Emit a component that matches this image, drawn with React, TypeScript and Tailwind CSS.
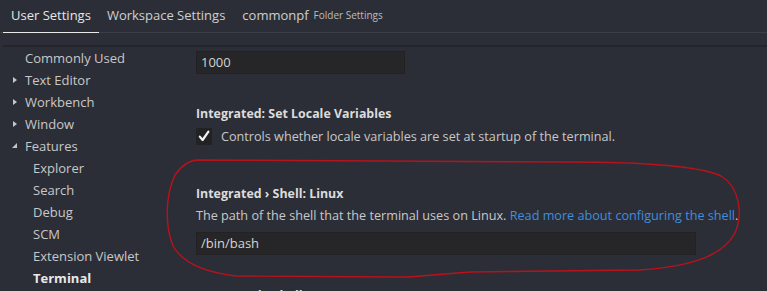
import React from 'react';

const tree = [
  { label: 'Commonly Used', depth: 0, twisty: null },
  { label: 'Text Editor', depth: 0, twisty: 'closed' },
  { label: 'Workbench', depth: 0, twisty: 'closed' },
  { label: 'Window', depth: 0, twisty: 'closed' },
  { label: 'Features', depth: 0, twisty: 'open' },
  { label: 'Explorer', depth: 1, twisty: null },
  { label: 'Search', depth: 1, twisty: null },
  { label: 'Debug', depth: 1, twisty: null },
  { label: 'SCM', depth: 1, twisty: null },
  { label: 'Extension Viewlet', depth: 1, twisty: null },
  { label: 'Terminal', depth: 1, twisty: null, active: true },
];

const Twisty = ({ kind }: { kind: string | null }) => {
  if (kind === 'closed') {
    return (
      <svg width="6" height="8" viewBox="0 0 6 8" className="absolute left-[12px] top-[7px]">
        <path d="M1 1 L5 4 L1 7 Z" fill="#c5c5c5" />
      </svg>
    );
  }
  if (kind === 'open') {
    return (
      <svg width="7" height="7" viewBox="0 0 7 7" className="absolute left-[11px] top-[7px]">
        <path d="M6 1 L6 6 L1 6 Z" fill="#c5c5c5" />
      </svg>
    );
  }
  return null;
};

const Sidebar = () => (
  <div className="w-[190px] shrink-0 text-[13px]">
    {tree.map((item) => (
      <div
        key={item.label}
        className={`relative h-[22px] leading-[22px] ${item.depth ? 'pl-[33px]' : 'pl-[25px]'} ${item.active ? 'font-bold text-[#e8e8e8]' : 'text-[#c8c8c8]'}`}
      >
        <Twisty kind={item.twisty} />
        {item.label}
      </div>
    ))}
  </div>
);

const TextInput = ({ value, width }: { value: string; width: string }) => (
  <div className={`${width} h-[23px] bg-[#262628] border border-[#222224] pl-[4px] leading-[21px] text-[#d4d4d4] text-[13px]`}>
    {value}
  </div>
);

const Content = () => (
  <div className="flex-1 pl-[6px] pt-[4px] text-[12.65px]">
    <TextInput value="1000" width="w-[209px]" />

    <div className="mt-[31px] font-bold text-[#dcdcdc] leading-[18px] text-[12.4px]">Integrated: Set Locale Variables</div>
    <div className="mt-[4px] flex items-center gap-[9px]">
      <div className="w-[16px] h-[17px] bg-[#222224] flex items-center justify-center">
        <svg width="12" height="12" viewBox="0 0 12 12">
          <path d="M1.8 6.6 L4.6 10 L10.4 1.6" fill="none" stroke="#f2f2f2" strokeWidth="2.2" strokeLinecap="round" strokeLinejoin="round" />
        </svg>
      </div>
      <span className="text-[#c8c8c8]">Controls whether locale variables are set at startup of the terminal.</span>
    </div>

    <div className="mt-[39px] font-bold text-[#dcdcdc] leading-[18px] text-[12.4px]">Integrated › Shell: Linux</div>
    <div className="mt-[3px] text-[#c8c8c8] leading-[18px] whitespace-nowrap">
      The path of the shell that the terminal uses on Linux.{' '}
      <span className="text-[#3e8fdd]">Read more about configuring the shell</span>.
    </div>
    <div className="mt-[8px]">
      <TextInput value="/bin/bash" width="w-[500px]" />
    </div>

    <div className="mt-[32px] font-bold text-[#dcdcdc] leading-[18px] text-[12.4px]">Integrated › Shell: Osx</div>
  </div>
);

export default function App() {
  return (
    <div
      className="relative w-[767px] h-[291px] overflow-hidden bg-[#2c2e37] text-[13px]"
      style={{ fontFamily: '"Open Sans", "Noto Sans", sans-serif' }}
    >
      {/* tabs */}
      <div className="h-[33px] flex items-end border-b border-[#3c3f48]">
        <div className="flex items-center h-[33px]">
          <div className="relative h-full px-[8px] ml-[3px] flex items-center text-[#e6e6e6]">
            User Settings
            <div className="absolute left-0 right-0 bottom-[-1px] h-[1px] bg-[#e8e8e8]" />
          </div>
          <div className="h-full px-[8px] flex items-center text-[#cfcfcf]">Workspace Settings</div>
          <div className="h-full px-[8px] ml-[1px] flex items-center text-[#cfcfcf]">
            commonpf
            <span className="ml-[5px] text-[10px] text-[#bdbdbd]">Folder Settings</span>
          </div>
        </div>
      </div>
      <div className="h-[12px]" />
      <div className="ml-[3px] h-[2px] bg-[#23252c]" />

      <div className="flex">
        <Sidebar />
        <Content />
      </div>

      {/* hand-drawn annotation */}
      <svg className="absolute inset-0 pointer-events-none" width="767" height="291" viewBox="0 0 767 291">
        <path
          d="M198 160 L566 162 C640 162 700 166 721 176 C740 187 743 215 735 233 C725 252 700 266 640 270 L470 272 C440 274 420 277 398 277 L236 276 C202 272 182 262 173 246 C165 226 165 196 175 175 C182 165 190 160 198 160"
          fill="none"
          stroke="#b8121c"
          strokeWidth="1.4"
        />
      </svg>
    </div>
  );
}
